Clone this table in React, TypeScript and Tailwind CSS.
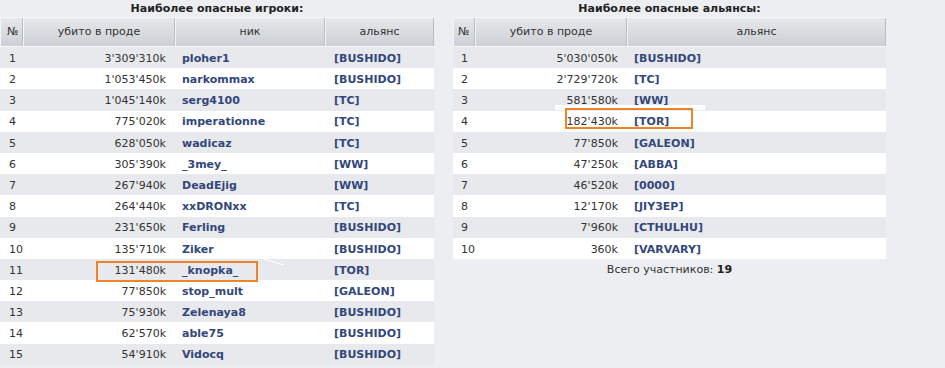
import React from 'react';

const players = [
  { n: 1, kills: "3'309'310k", nick: 'ploher1', ally: '[BUSHIDO]' },
  { n: 2, kills: "1'053'450k", nick: 'narkommax', ally: '[BUSHIDO]' },
  { n: 3, kills: "1'045'140k", nick: 'serg4100', ally: '[TC]' },
  { n: 4, kills: "775'020k", nick: 'imperationne', ally: '[TC]' },
  { n: 5, kills: "628'050k", nick: 'wadicaz', ally: '[TC]' },
  { n: 6, kills: "305'390k", nick: '_3mey_', ally: '[WW]' },
  { n: 7, kills: "267'940k", nick: 'DeadEjig', ally: '[WW]' },
  { n: 8, kills: "264'440k", nick: 'xxDRONxx', ally: '[TC]' },
  { n: 9, kills: "231'650k", nick: 'Ferling', ally: '[BUSHIDO]' },
  { n: 10, kills: "135'710k", nick: 'Ziker', ally: '[BUSHIDO]' },
  { n: 11, kills: "131'480k", nick: '_knopka_', ally: '[TOR]' },
  { n: 12, kills: "77'850k", nick: 'stop_mult', ally: '[GALEON]' },
  { n: 13, kills: "75'930k", nick: 'Zelenaya8', ally: '[BUSHIDO]' },
  { n: 14, kills: "62'570k", nick: 'able75', ally: '[BUSHIDO]' },
  { n: 15, kills: "54'910k", nick: 'Vidocq', ally: '[BUSHIDO]' },
];

const alliances = [
  { n: 1, kills: "5'030'050k", ally: '[BUSHIDO]' },
  { n: 2, kills: "2'729'720k", ally: '[TC]' },
  { n: 3, kills: "581'580k", ally: '[WW]' },
  { n: 4, kills: "182'430k", ally: '[TOR]' },
  { n: 5, kills: "77'850k", ally: '[GALEON]' },
  { n: 6, kills: "47'250k", ally: '[ABBA]' },
  { n: 7, kills: "46'520k", ally: '[0000]' },
  { n: 8, kills: "12'170k", ally: '[JIY3EP]' },
  { n: 9, kills: "7'960k", ally: '[CTHULHU]' },
  { n: 10, kills: "360k", ally: '[VARVARY]' },
];

const headCell =
  'flex items-center border-l border-l-[#f4f5f7] border-r border-r-[#b9bcc1] bg-gradient-to-b from-[#e6e8eb] to-[#ccd0d4]';
const link = 'font-bold text-[#34477a]';

const App = () => {
  return (
    <div className="relative w-[945px] h-[368px] overflow-hidden bg-[#eceef1] text-[11px] text-[#333] font-['DejaVu_Sans',Verdana,sans-serif]">
      <div className="flex gap-[19px]">
        {/* players */}
        <div className="w-[434px] flex flex-col">
          <div className="h-[17px] pt-[1px] flex items-center justify-center font-bold text-[#222]">
            Наиболее опасные игроки:
          </div>
          <div className="grid grid-cols-[23px_152px_150px_109px] h-[30px] border-t border-t-[#f7f8f9] border-b border-b-[#f7f8f9]">
            <div className={headCell + ' pl-[6px]'}>№</div>
            <div className={headCell + ' justify-center'}>убито в проде</div>
            <div className={headCell + ' justify-center'}>ник</div>
            <div className={headCell + ' justify-center'}>альянс</div>
          </div>
          {players.map((p) => (
            <div
              key={p.n}
              className={
                'grid grid-cols-[23px_152px_150px_109px] h-[21.2px] pt-[3px] items-center ' +
                (p.n % 2 === 0 ? 'bg-white' : 'bg-[#e7e9ed]')
              }
            >
              <div className="pl-[9px]">{p.n}</div>
              <div className="text-right pr-[9px]">{p.kills}</div>
              <div className={link + ' pl-[7px]'}>{p.nick}</div>
              <div className={link + ' pl-[9px]'}>{p.ally}</div>
            </div>
          ))}
        </div>

        {/* alliances */}
        <div className="w-[433px] flex flex-col">
          <div className="h-[17px] pt-[1px] flex items-center justify-center font-bold text-[#222]">
            Наиболее опасные альянсы:
          </div>
          <div className="grid grid-cols-[22px_152px_259px] h-[30px] border-t border-t-[#f7f8f9] border-b border-b-[#f7f8f9]">
            <div className={headCell + ' pl-[4px]'}>№</div>
            <div className={headCell + ' justify-center'}>убито в проде</div>
            <div className={headCell + ' justify-center'}>альянс</div>
          </div>
          {alliances.map((a) => (
            <div
              key={a.n}
              className={
                'grid grid-cols-[22px_152px_259px] h-[21.2px] pt-[3px] items-center ' +
                (a.n % 2 === 0 ? 'bg-white' : 'bg-[#e7e9ed]')
              }
            >
              <div className="pl-[8px]">{a.n}</div>
              <div className="text-right pr-[9px]">{a.kills}</div>
              <div className={link + ' pl-[7px]'}>{a.ally}</div>
            </div>
          ))}
          <div className="h-[20px] pt-[2px] flex items-center justify-center">
            <span>
              Всего участников: <b className="text-[#222]">19</b>
            </span>
          </div>
        </div>
      </div>

      {/* annotation marks */}
      <div className="absolute left-[555px] top-[105px] w-[150px] h-[5px] bg-white" />
      <div className="absolute left-[96px] top-[261px] w-[162px] h-[21px] border-2 border-[#ee8429]" />
      <div className="absolute left-[565px] top-[108px] w-[128px] h-[21px] border-2 border-[#ee8429]" />
      <svg className="absolute left-[260px] top-[258px]" width="30" height="12">
        <line x1="4" y1="1" x2="24" y2="7" stroke="#ffffff" strokeWidth="1.2" />
      </svg>
    </div>
  );
};

export default App;
